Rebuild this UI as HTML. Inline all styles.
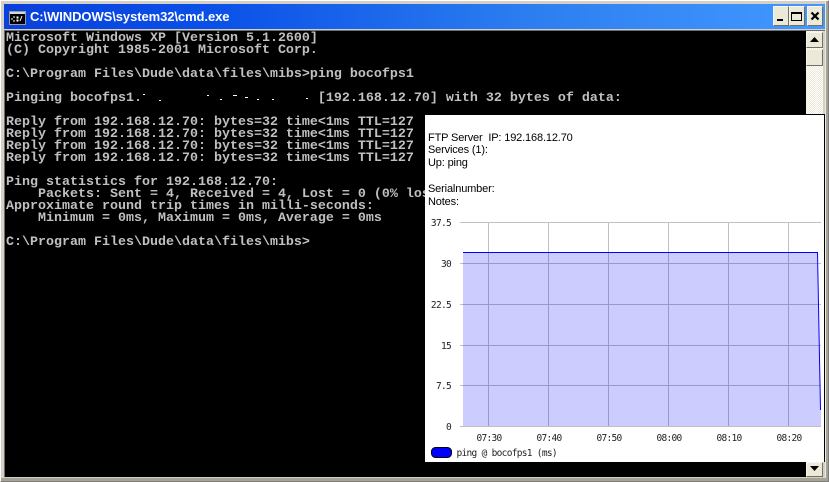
<!DOCTYPE html>
<html><head><meta charset="utf-8"><style>
html,body{margin:0;padding:0;background:#fff}
#w{position:relative;width:829px;height:482px;overflow:hidden;background:#d4d0c8}
#w div,#w pre,#w svg{position:absolute}
#frame{left:0;top:0;width:829px;height:482px;box-sizing:border-box;border:1px solid #fff;border-right-color:#7f7d77;border-bottom-color:#7f7d77}
#title{left:4px;top:4px;width:821px;height:25px;background:linear-gradient(90deg,#0a40dc 0,#0a50e8 25%,#2d7ff0 65%,#4398ff 100%)}
#ttext{left:30px;top:7px;font:bold 13px/20px "Liberation Sans",sans-serif;color:#fff;white-space:pre;letter-spacing:-.08px}
#con{left:5px;top:31px;width:801px;height:446px;background:#000}
#txt{left:6px;top:33px;margin:0;font:bold 13.33px/12px "Liberation Mono",monospace;color:#c0c0c0;white-space:pre}
.btn{box-sizing:border-box;background:#ece9d8;border:1px solid;border-color:#f6f5ee #716f64 #716f64 #f6f5ee}
.s{width:2px;height:1px;background:#fff}
#track{left:806px;top:31px;width:17px;height:446px;background-color:#f5f3ea;background-image:repeating-conic-gradient(#fff 0 25%,#ece9d8 0 50%);background-size:2px 2px}
#panel{left:425px;top:114px;width:400px;height:348px;box-sizing:border-box;background:#fff;border-top:1px solid #000;border-right:1px solid #000}
#info{left:428px;top:131.500px;margin:0;font:11px/12.9px "Liberation Sans",sans-serif;color:#000;white-space:pre;letter-spacing:-.15px}
</style></head><body><div id="w">
<div id="frame"></div>
<div style="left:825px;top:1px;width:1px;height:480px;background:#ece9d8"></div>
<div style="left:826px;top:1px;width:2px;height:480px;background:#a5a298"></div>
<div style="left:1px;top:478px;width:827px;height:3px;background:#a5a298"></div>
<div style="left:4px;top:30px;width:821px;height:1px;background:#716f64"></div>
<div style="left:4px;top:30px;width:1px;height:447px;background:#716f64"></div>
<div id="title"></div>
<svg style="left:9px;top:11px" width="17" height="14" viewBox="0 0 17 14"><rect x=".5" y=".5" width="16" height="13" fill="#000" stroke="#9a9a9a"/><rect x="1" y="1" width="15" height="2" fill="#d8d8d8"/><path d="M4 6h2M3 7v2M4 10h2M8 6h1v1h-1zM8 9h1v1h-1zM13 5l-2 5" stroke="#fff" stroke-width="1" fill="none"/></svg>
<div id="ttext">C:\WINDOWS\system32\cmd.exe</div>
<div class="btn" style="left:773px;top:6px;width:16px;height:20px"></div>
<div style="left:777px;top:19px;width:6px;height:2px;background:#000"></div>
<div class="btn" style="left:789px;top:6px;width:16px;height:20px"></div>
<div style="left:791px;top:12px;box-sizing:border-box;width:11px;height:9px;border:1px solid #000;border-top-width:2px"></div>
<div class="btn" style="left:807px;top:6px;width:16px;height:20px"></div>
<svg style="left:810px;top:11px" width="10" height="10" viewBox="0 0 10 10"><path d="M1.5 1.5l7 7M8.5 1.5l-7 7" stroke="#000" stroke-width="2.2"/></svg>
<div id="con"></div>
<div id="track"></div>
<div class="btn" style="left:806px;top:32px;width:17px;height:16px"></div>
<svg style="left:810px;top:37px" width="9" height="5"><path d="M4.5 0L9 5H0z" fill="#000"/></svg>
<div class="btn" style="left:806px;top:49px;width:17px;height:17px"></div>
<div class="btn" style="left:806px;top:462px;width:17px;height:15px"></div>
<svg style="left:810px;top:466px" width="9" height="5"><path d="M0 0H9L4.5 5z" fill="#000"/></svg>
<pre id="txt">Microsoft Windows XP [Version 5.1.2600]
(C) Copyright 1985-2001 Microsoft Corp.

C:\Program Files\Dude\data\files\mibs>ping bocofps1

Pinging bocofps1.                      [192.168.12.70] with 32 bytes of data:

Reply from 192.168.12.70: bytes=32 time&lt;1ms TTL=127
Reply from 192.168.12.70: bytes=32 time&lt;1ms TTL=127
Reply from 192.168.12.70: bytes=32 time&lt;1ms TTL=127
Reply from 192.168.12.70: bytes=32 time&lt;1ms TTL=127

Ping statistics for 192.168.12.70:
    Packets: Sent = 4, Received = 4, Lost = 0 (0% loss),
Approximate round trip times in milli-seconds:
    Minimum = 0ms, Maximum = 0ms, Average = 0ms

C:\Program Files\Dude\data\files\mibs></pre>
<div class="s" style="left:143px;top:94px"></div>
<div class="s" style="left:159px;top:100px"></div>
<div class="s" style="left:207px;top:95px"></div>
<div class="s" style="left:220px;top:99px"></div>
<div class="s" style="left:233px;top:95px;width:4px"></div>
<div class="s" style="left:245px;top:97px;width:3px"></div>
<div class="s" style="left:257px;top:99px"></div>
<div class="s" style="left:272px;top:99px"></div>
<div class="s" style="left:306px;top:98px"></div>
<div id="panel"></div>
<pre id="info">FTP Server  IP: 192.168.12.70
Services (1):
Up: ping

Serialnumber:
Notes:</pre>
<svg style="left:425px;top:215px" width="400" height="247" viewBox="425 215 400 247">
<g stroke="#c0c0c0" stroke-width="1" fill="none">
<path d="M488.500 222.500V426M548.500 222.500V426M608.500 222.500V426M668.500 222.500V426M728.500 222.500V426M788.500 222.500V426"/>
<path d="M460 222.500H821M460 263.500H821M460 304.500H821M460 345.500H821M460 385.500H821M460 426.500H821"/>
</g>
<path d="M463 252H817L821 410V426H463Z" fill="#0000ff" fill-opacity=".2"/>
<path d="M463 252.500H817.500L820.500 410" stroke="#0000ff" stroke-width="1" fill="none"/>
<g font-family="'DejaVu Sans Mono','Liberation Mono',monospace" font-size="9.500" fill="#222" letter-spacing="-.7">
<text x="451" y="226" text-anchor="end">37.5</text>
<text x="451" y="267" text-anchor="end">30</text>
<text x="451" y="308" text-anchor="end">22.5</text>
<text x="451" y="349" text-anchor="end">15</text>
<text x="451" y="389" text-anchor="end">7.5</text>
<text x="451" y="430" text-anchor="end">0</text>
<text x="489" y="441" text-anchor="middle">07:30</text>
<text x="549" y="441" text-anchor="middle">07:40</text>
<text x="609" y="441" text-anchor="middle">07:50</text>
<text x="669" y="441" text-anchor="middle">08:00</text>
<text x="729" y="441" text-anchor="middle">08:10</text>
<text x="789" y="441" text-anchor="middle">08:20</text>
<text x="456.500" y="456">ping @ bocofps1 (ms)</text>
</g>
<rect x="431.500" y="447.500" width="20" height="10" rx="4" fill="#0000ff" stroke="#000"/>
</svg>
</div></body></html>
